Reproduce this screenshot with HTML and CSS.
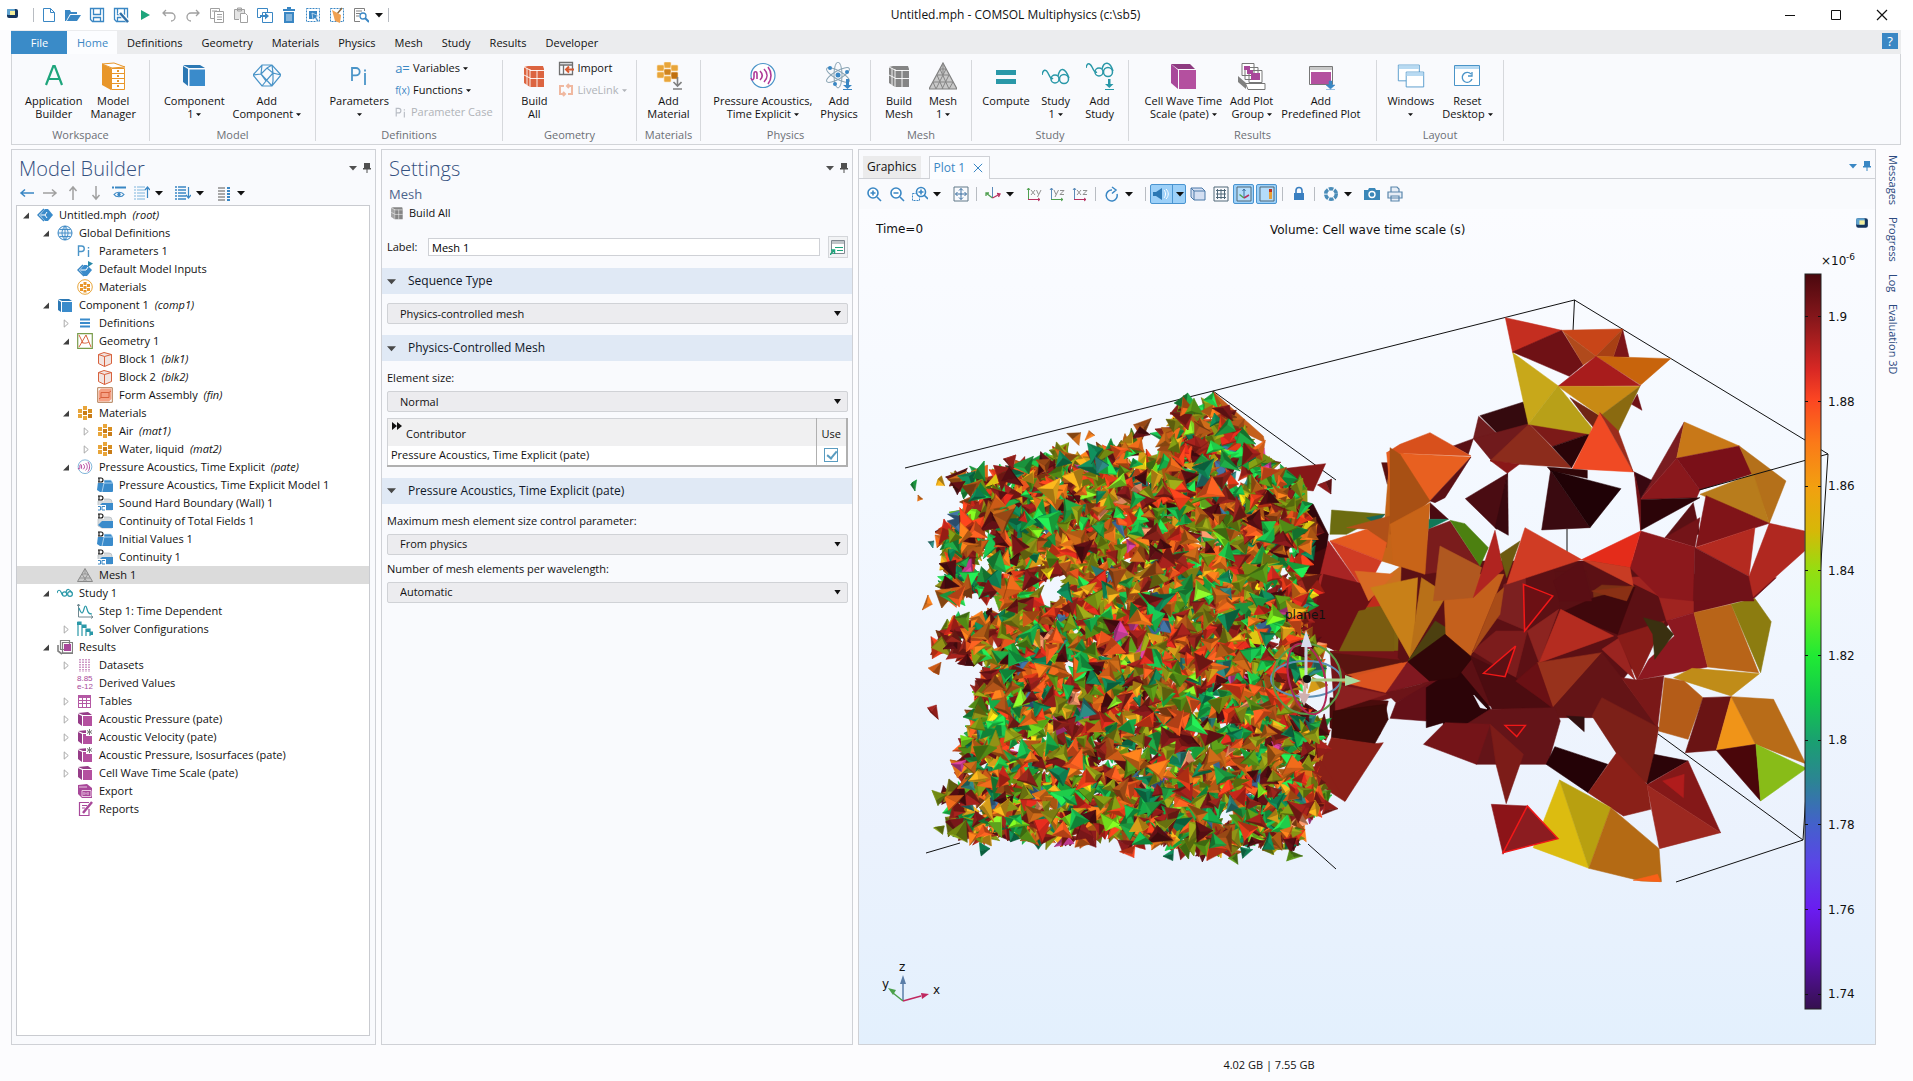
FILE: index.html
```html
<!DOCTYPE html>
<html lang="en">
<head>
<meta charset="utf-8">
<title>Untitled.mph - COMSOL Multiphysics</title>
<link rel="stylesheet" href="styles.css">
</head>
<body>
<svg class="defs" aria-hidden="true">
<defs>
<linearGradient id="g-bg" x1="0" y1="0" x2="0" y2="1"><stop offset="0" stop-color="#fbfcff"/><stop offset=".35" stop-color="#f3f8ff"/><stop offset=".75" stop-color="#ebf2fd"/><stop offset="1" stop-color="#e3f0fd"/></linearGradient>
<linearGradient id="g-bar" x1="0" y1="0" x2="0" y2="1"><stop offset="0" stop-color="#4a080e"/><stop offset=".06" stop-color="#86171b"/><stop offset=".13" stop-color="#d82824"/><stop offset=".17" stop-color="#fb4522"/><stop offset=".23" stop-color="#fb7a18"/><stop offset=".29" stop-color="#f2a010"/><stop offset=".35" stop-color="#d6b808"/><stop offset=".4" stop-color="#98dc10"/><stop offset=".45" stop-color="#70ec1c"/><stop offset=".52" stop-color="#20ea34"/><stop offset=".58" stop-color="#12c84c"/><stop offset=".635" stop-color="#1aa070"/><stop offset=".69" stop-color="#2c8494"/><stop offset=".75" stop-color="#4460cc"/><stop offset=".8" stop-color="#5a46e6"/><stop offset=".865" stop-color="#6a1cf0"/><stop offset=".92" stop-color="#6010bc"/><stop offset="1" stop-color="#35104e"/></linearGradient>
</defs>
<symbol id="logo" viewBox="0 0 16 16"><rect x="3" y="4" width="11" height="9" rx="2" fill="#14355e"/><rect x="3" y="4" width="8" height="6" rx="1" fill="#5fa3d0"/><rect x="6" y="6" width="5" height="4" fill="#f4ee9a"/></symbol>
<symbol id="new" viewBox="0 0 16 16"><path d="M2.500 1.500h7l4 4v9h-11zM9.500 1.500v4h4" fill="#fff" stroke="#3a87c4"/></symbol>
<symbol id="open" viewBox="0 0 16 16"><path d="M0 3h5l1 2h6v2H5l-4 7H0zM5.500 8H16l-4 6H1.800z" fill="#3a87c4"/></symbol>
<symbol id="save" viewBox="0 0 16 16"><path d="M1.500 1.500h13v13h-11l-2-2zM4.500 1.500v6h7v-6M4.500 14.500v-4h7v4" fill="none" stroke="#3a87c4" stroke-width="1.300"/></symbol>
<symbol id="saveas" viewBox="0 0 16 16"><path d="M1.500 1.500h13v13h-11l-2-2zM4.500 1.500v6h7v-6M4.500 14.500v-4h4" fill="none" stroke="#3a87c4" stroke-width="1.300"/><path d="M6 5l9 9" stroke="#fff" stroke-width="4"/><path d="M7 6l8 9" stroke="#2f6fa6" stroke-width="2.500"/></symbol>
<symbol id="play" viewBox="0 0 16 16"><path d="M4 3l9 5-9 5z" fill="#1ea57c"/></symbol>
<symbol id="undo" viewBox="0 0 16 16"><path d="M5 3L2 6l3 3M2 6h8a4 4 0 0 1 0 8" fill="none" stroke="#a0a0a0" stroke-width="1.300"/></symbol>
<symbol id="redo" viewBox="0 0 16 16"><path d="M11 3l3 3-3 3M14 6H6a4 4 0 0 0 0 8" fill="none" stroke="#a0a0a0" stroke-width="1.300"/></symbol>
<symbol id="copy" viewBox="0 0 16 16"><path d="M5 11.500H1.500v-10h9V4M5.500 4.500h9v11h-9zM8 7.500h5M8 10h5M8 12.500h5M3 4h5" fill="none" stroke="#a0a0a0"/></symbol>
<symbol id="paste" viewBox="0 0 16 16"><path d="M6 12.500H1.500v-10h10V6M4.500 1h4v3h-4z" fill="#e4e4e4" stroke="#a0a0a0"/><path d="M7.500 6.500h5l2 2v7h-7z" fill="#fff" stroke="#a0a0a0"/></symbol>
<symbol id="dup" viewBox="0 0 16 16"><path d="M4 10.500H.5v-9h10V5M5.500 5.500h10v10h-10z" fill="none" stroke="#3a87c4"/><path d="M3 8h5V5.500L12 9l-4 3.500V10H3z" fill="#3a87c4"/></symbol>
<symbol id="trash" viewBox="0 0 16 16"><path d="M2 2h12v2H2zM6 0h4v2H6zM3 5h10v11H3z" fill="#3a87c4"/><path d="M6 7v7M8 7v7M10 7v7" stroke="#cfe2f2"/></symbol>
<symbol id="selbox" viewBox="0 0 16 16"><path d="M1.500 1.500h13v13h-13z" fill="none" stroke="#3a87c4" stroke-dasharray="2 1"/><path d="M4 4h8v8H4z" fill="#3a87c4"/><path d="M7 6l7 3-3 1 3 4-2 1-2-4-2 2z" fill="#3a87c4" stroke="#fff" stroke-width=".6"/></symbol>
<symbol id="clean" viewBox="0 0 16 16"><path d="M1.500 1.500h13v13h-13z" fill="none" stroke="#3a87c4" stroke-dasharray="2 1"/><path d="M13 1L8 7" stroke="#8b6a40" stroke-width="1.500"/><path d="M3 3l9 5-1 8-5-2z" fill="#f0a050"/></symbol>
<symbol id="find" viewBox="0 0 16 16"><path d="M11.500 4V1.500h-10v13H7M3 4h6M3 6.500h4M3 9h3" fill="none" stroke="#808080"/><circle cx="10" cy="9" r="3" fill="#fff" stroke="#3a87c4" stroke-width="1.300"/><path d="M12 11l4 4" stroke="#3a87c4" stroke-width="2"/></symbol>
<symbol id="caret" viewBox="0 0 8 8"><path d="M0 2h8L4 6.500z" fill="currentColor"/></symbol>
<symbol id="pin" viewBox="0 0 8 12"><path d="M1 1h6v5h1v1.500H0V6h1zM3.500 7h1v4h-1z" fill="currentColor"/></symbol>
<symbol id="min" viewBox="0 0 12 12"><path d="M1 6.500h10" stroke="#111"/></symbol>
<symbol id="max" viewBox="0 0 12 12"><path d="M1.500 1.500h9v9h-9z" fill="none" stroke="#111"/></symbol>
<symbol id="close" viewBox="0 0 12 12"><path d="M1 1l10 10M11 1L1 11" stroke="currentColor" stroke-width="1.200"/></symbol>

<symbol id="b-app" viewBox="0 0 28 28"><path d="M6 23L13.300 4h1.400L22 23M8.500 17h11" fill="none" stroke="#1ea57c" stroke-width="2.200"/></symbol>
<symbol id="b-mm" viewBox="0 0 28 28"><path d="M3 2l12-1 11 4-13 1z" fill="#fff" stroke="#e8962a"/><path d="M3 2l9 4v22l-9-5z" fill="#e8962a"/><path d="M12.500 6.500h13v21h-13zM12.500 11.500h13M12.500 16.500h13M12.500 21.500h13" fill="#fff" stroke="#e8962a"/><path d="M18 9h2M18 14h2M18 19h2M18 24h2" stroke="#e8962a" stroke-width="2"/></symbol>
<symbol id="b-comp" viewBox="0 0 28 28"><path d="M3 3h17l5 3H9zM3 4l5 3v17l-5-4z" fill="#2c78b4"/><path d="M9.500 7.500H25V24H9.500z" fill="#3a8bcb"/></symbol>
<symbol id="b-addc" viewBox="0 0 28 28"><path d="M9 3h10l9 10-9 11H9L0 13zM9 3l-1 9 11 12M19 3l1 8 8 2M8 12l6-6 6 5-7 8zM14 6l5-3M8 12L0 13M20 11v8l-1 5M13 19l-4 5" fill="none" stroke="#4a94c8" stroke-width="1.200"/></symbol>
<symbol id="pi" viewBox="0 0 16 16"><path d="M1.500 13V3h3a2.700 2.700 0 0 1 0 5.500h-3M11.500 7v7M11.500 4v1.500" fill="none" stroke="#4a94c8" stroke-width="1.400"/></symbol>
<symbol id="b-pi" viewBox="0 0 28 28"><path d="M7 19V6h4a3.700 3.700 0 0 1 0 7.400H7M20 11v12M20 7.500v2" fill="none" stroke="#4a94c8" stroke-width="1.800"/></symbol>
<symbol id="pig" viewBox="0 0 16 16"><path d="M1.500 13V3h3a2.700 2.700 0 0 1 0 5.500h-3M11.500 7v7M11.500 4v1.500" fill="none" stroke="#b8bcc4" stroke-width="1.400"/></symbol>
<symbol id="b-build" viewBox="0 0 28 28"><path d="M4 5l4-1h15l1 3v18H10l-6-4z" fill="currentColor"/><path d="M10 8.500h14M10 7v18M4 5l6 3M10 16.500h14M17 8v17M7 6.500v17M4 13l6 3" stroke="#fff" stroke-width=".9" fill="none"/></symbol>
<symbol id="import" viewBox="0 0 16 16"><path d="M1.500 2.500h13v12h-13zM1.500 5h13M5.500 5v9" fill="none" stroke="#707070" stroke-width="1.300"/><path d="M16 9.500H8m3-3l-3 3 3 3" stroke="#d85a30" stroke-width="2" fill="none"/></symbol>
<symbol id="livelink" viewBox="0 0 16 16"><path d="M6 4H2v8h5M5 10l2 2-2 2M10 12h4V4H9M11 2L9 4l2 2" fill="none" stroke="#f0b8a0" stroke-width="2"/></symbol>
<symbol id="matblk" viewBox="0 0 16 16"><g fill="#e8a53a"><rect x="6" y="1" width="4" height="4"/><rect x="1" y="4" width="4" height="4"/><rect x="11" y="4" width="4" height="4" fill="#d88e20"/><rect x="6" y="6" width="4" height="4" fill="#c87c18"/><rect x="1" y="9" width="4" height="4"/><rect x="11" y="9" width="4" height="4" fill="#c87c18"/><rect x="6" y="11" width="4" height="4"/></g></symbol>
<symbol id="b-mat" viewBox="0 0 28 28"><g fill="#e8a53a" stroke="#fbe3b8" stroke-width=".6"><rect x="10" y="0" width="7" height="6" rx="1"/><rect x="3" y="3" width="7" height="6" rx="1"/><rect x="17" y="3" width="7" height="6" rx="1"/><rect x="10" y="7" width="7" height="6" rx="1" fill="#cf8420"/><rect x="3" y="10" width="7" height="6" rx="1"/><rect x="17" y="10" width="7" height="7" rx="1" fill="#c0700f"/><rect x="10" y="14" width="7" height="6" rx="1"/></g><path d="M23.500 15v9m-4-4l4 4 4-4M19 27h9" stroke="#808080" stroke-width="1.600" fill="none"/></symbol>
<symbol id="b-pate" viewBox="0 0 28 28"><circle cx="14" cy="13.500" r="12" fill="#fff" stroke="#4a94c8" stroke-width="1.200"/><path d="M2 16c1 3 3 2 3-1v-3c0-3 3-3 3 0v5M11 9c3 3 3 6 0 9M15 7c4 4 4 9 0 13M19 5c4 5 4 12 0 17" fill="none" stroke="#b03a98" stroke-width="1.600"/></symbol>
<symbol id="b-phys" viewBox="0 0 28 28"><g fill="none" stroke="#8aa4b4"><ellipse cx="13" cy="13" rx="4" ry="13"/><ellipse cx="13" cy="13" rx="4" ry="13" transform="rotate(60 13 13)"/><ellipse cx="13" cy="13" rx="4" ry="13" transform="rotate(120 13 13)"/></g><g fill="#3a87c4"><circle cx="13" cy="13" r="2.500"/><circle cx="5" cy="6" r="2"/><circle cx="22" cy="10" r="2"/><circle cx="10" cy="22" r="2"/><path d="M21 17h3v6h3l-4.500 4L18 23h3z"/></g><path d="M18 27.500h9" stroke="#3a87c4"/></symbol>
<symbol id="b-tri" viewBox="0 0 28 28"><path d="M14 1L28 27H0z" fill="#c8c8c8" stroke="#808080" stroke-width="1.200"/><path d="M11 7h6M8 13h12M4 20h20M17 7L7 27M20 13l-7 14M24 20l-4 7M11 7l9 20M8 13l6 14M4 20l3 7M14 1v12" fill="none" stroke="#858585"/></symbol>
<symbol id="b-eq" viewBox="0 0 28 28"><path d="M4 8h20v5H4zM4 17h20v5H4z" fill="#2a98a8"/></symbol>
<symbol id="b-study" viewBox="0 0 28 28"><g fill="none" stroke="#2a98a8" stroke-width="1.500"><path d="M0 13c1-6 4-6 6-2s3 7 5 5"/><circle cx="13" cy="17" r="4"/><circle cx="22" cy="17" r="4.500"/><path d="M16 14c2-9 7-9 11 2"/></g></symbol>
<symbol id="b-studyadd" viewBox="0 0 28 28"><g fill="none" stroke="#2a98a8" stroke-width="1.500"><path d="M0 6c1-6 4-5 6-1s3 6 5 5"/><circle cx="13" cy="10" r="4"/><circle cx="22" cy="10" r="4.500"/><path d="M16 7c2-8 8-8 11 2"/></g><path d="M22 17h2.500v5h3l-4.200 4-4.300-4h3zM19 27h9v1h-9z" fill="#2a98a8"/></symbol>
<symbol id="b-cube" viewBox="0 0 28 28"><path d="M2 2h19l5 5H9z" fill="#8d3a80"/><path d="M2 2l7 6v19l-7-6z" fill="#a8489a"/><path d="M10 8h17v19H10z" fill="#b4509f"/></symbol>
<symbol id="b-plots" viewBox="0 0 28 28"><g fill="#fff" stroke="#777"><path d="M4 1.500h12v12H4zM7 5.500h13v12H7zM11 8.500h13v12H11z"/></g><path d="M6 4h6v4H6zM9 8h6v4H9zM13 11h9v7h-9z" fill="#a8489a"/><path d="M0 14l8 7v6l-8-7z" fill="#808080"/><path d="M7.500 21.500H27v6H10z" fill="#fff" stroke="#777"/></symbol>
<symbol id="b-predef" viewBox="0 0 28 28"><path d="M2.500 4.500h23v18h-23z" fill="#fff" stroke="#777"/><path d="M3 5h22v3H3z" fill="#c8c8c8"/><path d="M4 10h20v12H4z" fill="#b4509f"/><path d="M22 19h3v4h3l-4.500 4L19 23h3zM19 27.500h9" fill="#3a87c4" stroke="#3a87c4" stroke-width=".5"/></symbol>
<symbol id="b-wins" viewBox="0 0 32 28"><path d="M1.500 1.500h24v18h-24z" fill="#fff" stroke="#4a94c8"/><path d="M2 2h23v4H2z" fill="#b8daf2"/><path d="M10.500 9.500h20v17h-20z" fill="#fff" stroke="#4a94c8"/><path d="M11 10h19v4H11z" fill="#b8daf2"/></symbol>
<symbol id="b-reset" viewBox="0 0 28 28"><path d="M1.500 3.500h25v20h-25z" fill="#fff" stroke="#4a94c8"/><path d="M2 4h24v3H2z" fill="#b8daf2"/><path d="M18 12a5 5 0 1 0 1 5M19 10v4h-4" fill="none" stroke="#4a94c8" stroke-width="1.300"/></symbol>

<symbol id="ar-l" viewBox="0 0 16 16"><path d="M15 8H2M6 4.500L2 8l4 3.500" fill="none" stroke="currentColor" stroke-width="1.500"/></symbol>
<symbol id="ar-r" viewBox="0 0 16 16"><path d="M1 8h13M10 4.500L14 8l-4 3.500" fill="none" stroke="currentColor" stroke-width="1.500"/></symbol>
<symbol id="ar-u" viewBox="0 0 16 16"><path d="M8 15V2M4.500 6L8 2l3.500 4" fill="none" stroke="currentColor" stroke-width="1.500"/></symbol>
<symbol id="ar-d" viewBox="0 0 16 16"><path d="M8 1v13M4.500 10L8 14l3.500-4" fill="none" stroke="currentColor" stroke-width="1.500"/></symbol>
<symbol id="eye" viewBox="0 0 16 16"><path d="M1 2.500h2M4 2.500h11" stroke="#3a87c4" stroke-width="2"/><path d="M3 9.500c2-3 8-3 10 0-2 3-8 3-10 0z" fill="none" stroke="#3a87c4" stroke-width="1.200"/><circle cx="8" cy="9.500" r="1.700" fill="#3a87c4"/></symbol>
<symbol id="lst-u" viewBox="0 0 16 16"><path d="M0 2h11M0 5h11M0 8h11M0 11h11M0 14h11" stroke="#7db4dc" stroke-dasharray="2 1 10"/><path d="M13.500 13V2M11 5l2.500-3L16 5" fill="none" stroke="#3a87c4" stroke-width="1.200"/></symbol>
<symbol id="lst-d" viewBox="0 0 16 16"><path d="M0 2h11M0 5h11M0 8h11M0 11h11M0 14h11" stroke="#3a87c4" stroke-width="1.500" stroke-dasharray="2 1 10"/><path d="M13.500 2v11M11 10l2.500 3 2.500-3" fill="none" stroke="#3a87c4" stroke-width="1.200"/></symbol>
<symbol id="cols" viewBox="0 0 16 16"><path d="M2 3h7M2 6h7M2 9h7M2 12h7M2 15h7" stroke="#a8a8a8" stroke-width="2"/><path d="M11 3h3M11 6h3M11 9h3M11 12h3M11 15h3" stroke="#3a87c4" stroke-width="2"/></symbol>

<symbol id="t-open" viewBox="0 0 8 8"><path d="M7 1v6H1z" fill="#404040"/></symbol>
<symbol id="t-shut" viewBox="0 0 8 10"><path d="M2 1l4.500 4L2 9z" fill="#fff" stroke="#a0a0a0"/></symbol>
<symbol id="root" viewBox="0 0 16 16"><path d="M8 2h3l5 6-5 6H8L3 8z" fill="#3a8bcb"/><path d="M7 2L1 8l6 6" fill="none" stroke="#3a87c4" stroke-width="1.500"/><path d="M4 8h4l2-3M8 8l2 3" stroke="#fff" fill="none"/></symbol>
<symbol id="globe" viewBox="0 0 16 16"><circle cx="8" cy="8" r="7" fill="#eaf4fb" stroke="#3a87c4"/><path d="M1 8h14M8 1v14M2.500 4.500h11M2.500 11.500h11M8 1C4 5 4 11 8 15M8 1c4 4 4 10 0 14" fill="none" stroke="#3a87c4" stroke-width=".9"/></symbol>
<symbol id="inputs" viewBox="0 0 16 16"><path d="M7 4h3l5 5-5 6H7L3 9z" fill="#3a8bcb"/><path d="M6 4L1 9l6 6" fill="none" stroke="#3a87c4" stroke-width="1.500"/><path d="M11 0l5 2.500L11 6z" fill="#2a88a8"/><path d="M4 9h5l2-3" stroke="#fff" fill="none"/></symbol>
<symbol id="matc" viewBox="0 0 16 16"><circle cx="8" cy="8" r="7.300" fill="#fff" stroke="#e8a53a"/><path d="M6.500 3h3v3h-3zM3 5h3v3H3zM10 5h3v3h-3zM6.500 7h3v3h-3zM3 9h3v3H3zM10 9h3v3h-3zM6.500 11h3v2.500h-3z" fill="#e8962a"/></symbol>
<symbol id="comp" viewBox="0 0 16 16"><path d="M1 2h11l3 2H5zM1 3l3 2v10l-3-2z" fill="#2c78b4"/><path d="M5 5h10v10H5z" fill="#3a8bcb"/></symbol>
<symbol id="eq3" viewBox="0 0 16 16"><path d="M3 4.500h10M3 8h10M3 11.500h10" stroke="#3a8bcb" stroke-width="2"/></symbol>
<symbol id="geom" viewBox="0 0 16 16"><path d="M.7.7h14.600v14.600H.7z" fill="#fff" stroke="#7a9c4c" stroke-width="1.200"/><path d="M2 2l4 8M2 14L9 2l5 12M4 9c3 2 6 1 8 0" fill="none" stroke="#d8613c"/></symbol>
<symbol id="block" viewBox="0 0 16 16"><path d="M1.500 3.500L7 1.500l7.500 2v9l-7 3-6-3z" fill="#f2e4e0" stroke="#d8613c"/><path d="M1.500 3.500l6 2 7-2M7.500 5.500v10" fill="none" stroke="#d8613c"/></symbol>
<symbol id="asm" viewBox="0 0 16 16"><path d="M.7.7h14.600v14.600H.7z" fill="#fff" stroke="#b07a50"/><path d="M1.500 4L4 1.500h10.500V12L12 14.500H1.500z" fill="#f5a184"/><path d="M4 5.500h8v5H4zM12 5.500L14 4M4 10.500L2 12" fill="none" stroke="#d8613c"/></symbol>
<symbol id="dom" viewBox="0 0 16 16"><path d="M1 5h14a1 1 0 0 1 1 1v8a1 1 0 0 1-1 1H3L0 13z" fill="#3a8bcb"/><path d="M7 3h7l2 3H7zM5 15l2-9" fill="#3a8bcb" stroke="#d8ecfa" stroke-width=".7"/><path d="M0 0h7v6H0z" fill="#fff"/><path d="M2 1h2a2 2 0 0 1 0 4H2zM1 1h2M1 5h2" fill="none" stroke="#111" stroke-width="1.100"/></symbol>
<symbol id="bnd" viewBox="0 0 16 16"><path d="M1 4h11a3 3 0 0 1 3 3v8H5L1 13z" fill="#d8dcde" stroke="#b0b8be" stroke-width=".7"/><path d="M5 8h11v7H5L1 12z" fill="#3a8bcb"/><path d="M0 0h7v6H0z" fill="#fff"/><path d="M2 1h2a2 2 0 0 1 0 4H2zM1 1h2M1 5h2" fill="none" stroke="#111" stroke-width="1.100"/></symbol>
<symbol id="bnd2" viewBox="0 0 16 16"><use href="#bnd"/><path d="M0 10h9v6H0z" fill="#fff"/><path d="M1 11.500h2.500V15H1M5 11.500V15h3M5 11.500h3" fill="none" stroke="#3a87c4"/></symbol>
<symbol id="tri" viewBox="0 0 16 16"><path d="M8 1.500l7.500 13H.5z" fill="#c8c8c8" stroke="#888"/><path d="M5 7h6M3 11h10M11 7l-5 8M5 7l5 8M8 2v5" stroke="#8a8a8a" stroke-width=".8" fill="none"/></symbol>
<symbol id="study" viewBox="0 0 16 16"><g fill="none" stroke="#2a98a8" stroke-width="1.200"><path d="M0 8c1-4 3-3 4-1s1 3 2 2"/><circle cx="7.500" cy="9" r="2.200"/><circle cx="13" cy="9" r="2.400"/><path d="M9 7c1-4 4-3 6 1"/></g></symbol>
<symbol id="step" viewBox="0 0 16 16"><path d="M1.500 1v13H16M0 3l1.500-2L3 3M14 12.500l2 1.500-2 1.500" fill="none" stroke="#708890"/><path d="M2 5c3 8 4 5 5 1s2-4 3 0 2 5 5 5" fill="none" stroke="#2a98a8" stroke-width="1.200"/></symbol>
<symbol id="solver" viewBox="0 0 16 16"><path d="M1 15V1h3v3M5 15V4h4v3M9 15V8h4v3M13 15v-4h3" fill="none" stroke="#2a98a8" stroke-width="1.200"/><path d="M0 1h4v3H0zM5 4h4v3H5zM9 8h4v3H9zM13 11h3v3h-3z" fill="#2a98a8"/></symbol>
<symbol id="results" viewBox="0 0 16 16"><path d="M3.500 1.500h9v9h-9zM5.500 3.500h10v11h-10z" fill="#fff" stroke="#808080" stroke-width="1.200"/><path d="M7 5h7v7H7z" fill="#a8489a"/><path d="M1 6v6l4 3M5 14h11" stroke="#808080" stroke-width="1.600" fill="none"/></symbol>
<symbol id="dsets" viewBox="0 0 16 16"><path d="M3 2v13M6 2v13M9 2v13M12 2v13" stroke="#c07ab4" stroke-width="1.500" stroke-dasharray="1.500 1"/></symbol>
<symbol id="tables" viewBox="0 0 16 16"><path d="M1 2h13v13H1z" fill="#b458a4"/><path d="M2 5h3v2H2zM6 5h3v2H6zM10 5h3v2h-3zM2 8h3v2H2zM6 8h3v2H6zM10 8h3v2h-3zM2 11h3v3H2zM6 11h3v3H6zM10 11h3v3h-3z" fill="#fff"/></symbol>
<symbol id="pcube" viewBox="0 0 16 16"><path d="M1 2l10-1 4 3H6zM1 3l4 2v10l-4-3z" fill="#963c88"/><path d="M6 5h9v10H6z" fill="#b4509f"/></symbol>
<symbol id="pcubes" viewBox="0 0 16 16"><use href="#pcube"/><path d="M9 0h7v7H9z" fill="#fff"/><path d="M12.500 0v6M10 1.500l5 3M15 1.500l-5 3" stroke="#777"/></symbol>
<symbol id="export" viewBox="0 0 16 16"><path d="M1 2l9-1 5 4v10H5l-4-4z" fill="#a8489a"/><path d="M2 4h8M5 7.500h9v6H5zM7 9v3M9 9.500v2M11 9v3" stroke="#f2d8ec" fill="none" stroke-width=".9"/></symbol>
<symbol id="report" viewBox="0 0 16 16"><path d="M12 8v6.500H2.500v-13H12M5 4.500h5M5 7h3" fill="none" stroke="#a8489a" stroke-width="1.200"/><path d="M15 1L6 12" stroke="#a8489a" stroke-width="2.500"/></symbol>

<symbol id="go" viewBox="0 0 16 16"><path d="M1.500 1.500h13v13h-13z" fill="#fff" stroke="#808890"/><path d="M2 2h12v3H2z" fill="#c0c4c8"/><path d="M5 8.500h8M7 11.500h6" stroke="#1ea57c"/><path d="M0 16l4-5M1 11h3.500V15" stroke="#1ea57c" stroke-width="1.500" fill="none"/></symbol>
<symbol id="ff" viewBox="0 0 10 8"><path d="M0 0l5 4-5 4zM5 0l5 4-5 4z" fill="#111"/></symbol>
<symbol id="zin" viewBox="0 0 16 16"><circle cx="7" cy="7" r="5" fill="#fff" stroke="#3a87c4" stroke-width="1.600"/><path d="M4.500 7h5M7 4.500v5M11 11l4 4" stroke="#3a87c4" stroke-width="1.600"/></symbol>
<symbol id="zout" viewBox="0 0 16 16"><circle cx="7" cy="7" r="5" fill="#fff" stroke="#3a87c4" stroke-width="1.600"/><path d="M4.500 7h5M11 11l4 4" stroke="#3a87c4" stroke-width="1.600"/></symbol>
<symbol id="zbox" viewBox="0 0 16 16"><path d="M.5 7.500h7v7h-7z" fill="none" stroke="#3a87c4" stroke-dasharray="2 1"/><circle cx="9" cy="6" r="4.500" fill="#fff" stroke="#3a87c4" stroke-width="1.600"/><path d="M6.500 6h5M9 3.500v5M12 9l4 4" stroke="#3a87c4" stroke-width="1.600"/></symbol>
<symbol id="zext" viewBox="0 0 16 16"><path d="M1 1h14v14H1z" fill="none" stroke="#607888"/><path d="M8 2.500v11M2.500 8h11M6 4.500l2-2 2 2M6 11.500l2 2 2-2M4.500 6l-2 2 2 2M11.500 6l2 2-2 2" fill="none" stroke="#3a6fa0"/></symbol>
<symbol id="axes" viewBox="0 0 16 16"><path d="M7.500 12V1" stroke="#5a8ab8"/><path d="M7.500 12L1 7M1 10V7h3" stroke="#50a050" stroke-width="1.300" fill="none"/><path d="M7.500 12L15 8M12 7.500l3 .5-1.500 3" stroke="#b83060" stroke-width="1.300" fill="none"/></symbol>
<symbol id="axxy" viewBox="0 0 16 16"><path d="M2.500 13V2M1 4l1.500-2L4 4" stroke="#50a050" fill="none"/><path d="M2 13.500h12M12 12l2 1.500-2 1.500" stroke="#b83060" fill="none"/><path d="M5 4l4 5M9 4L5 9M10.500 4l2 4.500M15 4l-3.500 7" stroke="#909090" fill="none"/></symbol>
<symbol id="axyz" viewBox="0 0 16 16"><path d="M2.500 13V2M1 4l1.500-2L4 4" stroke="#5a8ab8" fill="none"/><path d="M2 13.500h12M12 12l2 1.500-2 1.500" stroke="#50a050" fill="none"/><path d="M5 4l2 4.500M9.500 4L6 11M11 4.500h4l-4 4h4" stroke="#909090" fill="none"/></symbol>
<symbol id="axxz" viewBox="0 0 16 16"><path d="M2.500 13V2M1 4l1.500-2L4 4" stroke="#5a8ab8" fill="none"/><path d="M2 13.500h12M12 12l2 1.500-2 1.500" stroke="#b83060" fill="none"/><path d="M5 4l4 5M9 4L5 9M11 4.500h4l-4 4h4" stroke="#909090" fill="none"/></symbol>
<symbol id="rot" viewBox="0 0 16 16"><path d="M8 4a5.500 5.500 0 1 0 5 4M8 1l4 3-4 3.500" fill="none" stroke="#3a87c4" stroke-width="1.500"/></symbol>
<symbol id="light" viewBox="0 0 16 16"><path d="M0 6h3l6-4v12L3 10H0z" fill="#2c78b4"/><path d="M11 4c2 2 2 6 0 8M13 3c3 3 3 7 0 10" stroke="#fff" fill="none"/></symbol>
<symbol id="wcube" viewBox="0 0 16 16"><path d="M1 2h11l3 3v9H4l-3-3zM4 5h11M4 5v9M1 2l3 3" fill="#d4dff2" stroke="#4a78a8"/></symbol>
<symbol id="grid" viewBox="0 0 16 16"><path d="M1 1h14v14H1zM3 4.500h10M3 8h10M3 11.500h10M4.500 3v10M8 3v10M11.500 3v10" fill="none" stroke="#506878"/></symbol>
<symbol id="axbox" viewBox="0 0 16 16"><path d="M1 1h14v14H1z" fill="#b4dcfa" stroke="#506878"/><path d="M8 12V3M6.500 5L8 3l1.500 2" stroke="#3a6fa0" fill="none"/><path d="M8 12L3.500 8.500" stroke="#50a050" stroke-width="1.500"/><path d="M8 12l5-3" stroke="#b83060" stroke-width="1.500"/></symbol>
<symbol id="legend" viewBox="0 0 16 16"><path d="M1 1h14v14H1z" fill="#b4dcfa" stroke="#506878"/><path d="M10 3h3v3h-3z" fill="#c03020"/><path d="M10 6h3v3h-3z" fill="#f0a030"/><path d="M10 9h3v4h-3z" fill="#e0a040"/></symbol>
<symbol id="lock" viewBox="0 0 16 16"><path d="M3 7h10v7H3z" fill="#3a7fc0"/><path d="M5 7V4.500a3 3 0 0 1 6 0V7" fill="none" stroke="#3a7fc0" stroke-width="1.600"/></symbol>
<symbol id="apert" viewBox="0 0 16 16"><circle cx="8" cy="8" r="5.300" fill="none" stroke="#4a8cb8" stroke-width="3.500" stroke-dasharray="4.500 1.050"/></symbol>
<symbol id="camera" viewBox="0 0 16 16"><path d="M0 4h4l1-2h6l1 2h4v10H0z" fill="#3a87b8"/><circle cx="8" cy="8.500" r="3" fill="none" stroke="#fff" stroke-width="1.400"/></symbol>
<symbol id="print" viewBox="0 0 16 16"><path d="M4 6V1h6l2 2v3M1 6h14v6H1zM4 10h8v5H4z" fill="#e8eef6" stroke="#5a86ac" stroke-width="1.200"/></symbol>
</svg>

<header class="titlebar">
  <svg class="i16 applogo"><use href="#logo"/></svg>
  <div class="quick" role="toolbar" aria-label="Quick access">
    <i class="vsep"></i>
    <button aria-label="New"><svg class="i16"><use href="#new"/></svg></button>
    <button aria-label="Open"><svg class="i16"><use href="#open"/></svg></button>
    <button aria-label="Save"><svg class="i16"><use href="#save"/></svg></button>
    <button aria-label="Save as"><svg class="i16"><use href="#saveas"/></svg></button>
    <button aria-label="Run"><svg class="i16"><use href="#play"/></svg></button>
    <button aria-label="Undo"><svg class="i16"><use href="#undo"/></svg></button>
    <button aria-label="Redo"><svg class="i16"><use href="#redo"/></svg></button>
    <button aria-label="Copy"><svg class="i16"><use href="#copy"/></svg></button>
    <button aria-label="Paste"><svg class="i16"><use href="#paste"/></svg></button>
    <button aria-label="Duplicate"><svg class="i16"><use href="#dup"/></svg></button>
    <button aria-label="Delete"><svg class="i16"><use href="#trash"/></svg></button>
    <button aria-label="Select"><svg class="i16"><use href="#selbox"/></svg></button>
    <button aria-label="Clear selection"><svg class="i16"><use href="#clean"/></svg></button>
    <button aria-label="Find"><svg class="i16"><use href="#find"/></svg></button>
    <button class="cbtn" aria-label="More"><svg class="caret"><use href="#caret"/></svg></button>
    <i class="vsep"></i>
  </div>
  <h1 class="apptitle">Untitled.mph - COMSOL Multiphysics (c:\sb5)</h1>
  <div class="winbtns">
    <button aria-label="Minimize"><svg><use href="#min"/></svg></button>
    <button aria-label="Maximize"><svg><use href="#max"/></svg></button>
    <button aria-label="Close"><svg><use href="#close"/></svg></button>
  </div>
</header>

<div class="app">
<nav class="menu" aria-label="Ribbon tabs">
  <button class="file">File</button><button class="on">Home</button><button>Definitions</button><button>Geometry</button><button>Materials</button><button>Physics</button><button>Mesh</button><button>Study</button><button>Results</button><button>Developer</button>
  <button class="help" aria-label="Help">?</button>
</nav>

<div class="ribbon">
  <section class="grp g-work"><div class="btns">
    <button class="big"><svg><use href="#b-app"/></svg><span>Application<br>Builder</span></button>
    <button class="big"><svg><use href="#b-mm"/></svg><span>Model<br>Manager</span></button>
  </div><h2>Workspace</h2></section>
  <section class="grp g-model"><div class="btns">
    <button class="big"><svg><use href="#b-comp"/></svg><span>Component<br>1 <svg class="dd"><use href="#caret"/></svg></span></button>
    <button class="big"><svg><use href="#b-addc"/></svg><span>Add<br>Component <svg class="dd"><use href="#caret"/></svg></span></button>
  </div><h2>Model</h2></section>
  <section class="grp g-defs"><div class="btns">
    <button class="big"><svg><use href="#b-pi"/></svg><span>Parameters<br><svg class="dd"><use href="#caret"/></svg></span></button>
    <div class="stack">
      <button><b>a=</b>Variables <svg class="dd"><use href="#caret"/></svg></button>
      <button><b class="fx">f(x)</b>Functions <svg class="dd"><use href="#caret"/></svg></button>
      <button disabled><svg class="i12"><use href="#pig"/></svg>Parameter Case</button>
    </div>
  </div><h2>Definitions</h2></section>
  <section class="grp g-geom"><div class="btns">
    <button class="big"><svg class="c-red"><use href="#b-build"/></svg><span>Build<br>All</span></button>
    <div class="stack">
      <button><svg class="i16"><use href="#import"/></svg>Import</button>
      <button disabled><svg class="i16"><use href="#livelink"/></svg>LiveLink <svg class="dd"><use href="#caret"/></svg></button>
    </div>
  </div><h2>Geometry</h2></section>
  <section class="grp g-mat"><div class="btns">
    <button class="big"><svg><use href="#b-mat"/></svg><span>Add<br>Material</span></button>
  </div><h2>Materials</h2></section>
  <section class="grp g-phys"><div class="btns">
    <button class="big"><svg><use href="#b-pate"/></svg><span>Pressure Acoustics,<br>Time Explicit <svg class="dd"><use href="#caret"/></svg></span></button>
    <button class="big"><svg><use href="#b-phys"/></svg><span>Add<br>Physics</span></button>
  </div><h2>Physics</h2></section>
  <section class="grp g-mesh"><div class="btns">
    <button class="big"><svg class="c-grey"><use href="#b-build"/></svg><span>Build<br>Mesh</span></button>
    <button class="big"><svg><use href="#b-tri"/></svg><span>Mesh<br>1 <svg class="dd"><use href="#caret"/></svg></span></button>
  </div><h2>Mesh</h2></section>
  <section class="grp g-study"><div class="btns">
    <button class="big"><svg><use href="#b-eq"/></svg><span>Compute</span></button>
    <button class="big"><svg><use href="#b-study"/></svg><span>Study<br>1 <svg class="dd"><use href="#caret"/></svg></span></button>
    <button class="big"><svg><use href="#b-studyadd"/></svg><span>Add<br>Study</span></button>
  </div><h2>Study</h2></section>
  <section class="grp g-res"><div class="btns">
    <button class="big"><svg><use href="#b-cube"/></svg><span>Cell Wave Time<br>Scale (pate) <svg class="dd"><use href="#caret"/></svg></span></button>
    <button class="big"><svg><use href="#b-plots"/></svg><span>Add Plot<br>Group <svg class="dd"><use href="#caret"/></svg></span></button>
    <button class="big"><svg><use href="#b-predef"/></svg><span>Add<br>Predefined Plot</span></button>
  </div><h2>Results</h2></section>
  <section class="grp g-lay"><div class="btns">
    <button class="big"><svg><use href="#b-wins"/></svg><span>Windows<br><svg class="dd"><use href="#caret"/></svg></span></button>
    <button class="big"><svg><use href="#b-reset"/></svg><span>Reset<br>Desktop <svg class="dd"><use href="#caret"/></svg></span></button>
  </div><h2>Layout</h2></section>
</div>

<main class="work">
  <section class="panel builder">
    <div class="phead"><h2>Model Builder</h2><span class="pctl"><svg class="caret"><use href="#caret"/></svg><svg class="pin"><use href="#pin"/></svg></span></div>
    <div class="tools" role="toolbar" aria-label="Model Builder">
      <button class="c-blue" aria-label="Back"><svg class="i16"><use href="#ar-l"/></svg></button>
      <button class="c-mute" aria-label="Forward"><svg class="i16"><use href="#ar-r"/></svg></button>
      <button class="c-mute" aria-label="Move up"><svg class="i16"><use href="#ar-u"/></svg></button>
      <button class="c-mute" aria-label="Move down"><svg class="i16"><use href="#ar-d"/></svg></button>
      <button aria-label="Show"><svg class="i16"><use href="#eye"/></svg></button>
      <button aria-label="Collapse"><svg class="i16"><use href="#lst-u"/></svg></button>
      <button class="cbtn" aria-label="Collapse options"><svg class="caret"><use href="#caret"/></svg></button>
      <button aria-label="Expand"><svg class="i16"><use href="#lst-d"/></svg></button>
      <button class="cbtn" aria-label="Expand options"><svg class="caret"><use href="#caret"/></svg></button>
      <button aria-label="Node text"><svg class="i16"><use href="#cols"/></svg></button>
      <button class="cbtn" aria-label="Node text options"><svg class="caret"><use href="#caret"/></svg></button>
    </div>
    <ul class="tree">
      <li><svg class="tw"><use href="#t-open"/></svg><svg class="i16"><use href="#root"/></svg>Untitled.mph <em>(root)</em></li>
      <li class="l1"><svg class="tw"><use href="#t-open"/></svg><svg class="i16"><use href="#globe"/></svg>Global Definitions</li>
      <li class="l2"><i class="tw"></i><svg class="i16"><use href="#pi"/></svg>Parameters 1</li>
      <li class="l2"><i class="tw"></i><svg class="i16"><use href="#inputs"/></svg>Default Model Inputs</li>
      <li class="l2"><i class="tw"></i><svg class="i16"><use href="#matc"/></svg>Materials</li>
      <li class="l1"><svg class="tw"><use href="#t-open"/></svg><svg class="i16"><use href="#comp"/></svg>Component 1 <em>(comp1)</em></li>
      <li class="l2"><svg class="tw"><use href="#t-shut"/></svg><svg class="i16"><use href="#eq3"/></svg>Definitions</li>
      <li class="l2"><svg class="tw"><use href="#t-open"/></svg><svg class="i16"><use href="#geom"/></svg>Geometry 1</li>
      <li class="l3"><i class="tw"></i><svg class="i16"><use href="#block"/></svg>Block 1 <em>(blk1)</em></li>
      <li class="l3"><i class="tw"></i><svg class="i16"><use href="#block"/></svg>Block 2 <em>(blk2)</em></li>
      <li class="l3"><i class="tw"></i><svg class="i16"><use href="#asm"/></svg>Form Assembly <em>(fin)</em></li>
      <li class="l2"><svg class="tw"><use href="#t-open"/></svg><svg class="i16"><use href="#matblk"/></svg>Materials</li>
      <li class="l3"><svg class="tw"><use href="#t-shut"/></svg><svg class="i16"><use href="#matblk"/></svg>Air <em>(mat1)</em></li>
      <li class="l3"><svg class="tw"><use href="#t-shut"/></svg><svg class="i16"><use href="#matblk"/></svg>Water, liquid <em>(mat2)</em></li>
      <li class="l2"><svg class="tw"><use href="#t-open"/></svg><svg class="i16"><use href="#b-pate"/></svg>Pressure Acoustics, Time Explicit <em>(pate)</em></li>
      <li class="l3"><i class="tw"></i><svg class="i16"><use href="#dom"/></svg>Pressure Acoustics, Time Explicit Model 1</li>
      <li class="l3"><i class="tw"></i><svg class="i16"><use href="#bnd2"/></svg>Sound Hard Boundary (Wall) 1</li>
      <li class="l3"><i class="tw"></i><svg class="i16"><use href="#bnd"/></svg>Continuity of Total Fields 1</li>
      <li class="l3"><i class="tw"></i><svg class="i16"><use href="#dom"/></svg>Initial Values 1</li>
      <li class="l3"><i class="tw"></i><svg class="i16"><use href="#bnd2"/></svg>Continuity 1</li>
      <li class="l2 sel"><i class="tw"></i><svg class="i16"><use href="#tri"/></svg>Mesh 1</li>
      <li class="l1"><svg class="tw"><use href="#t-open"/></svg><svg class="i16"><use href="#study"/></svg>Study 1</li>
      <li class="l2"><i class="tw"></i><svg class="i16"><use href="#step"/></svg>Step 1: Time Dependent</li>
      <li class="l2"><svg class="tw"><use href="#t-shut"/></svg><svg class="i16"><use href="#solver"/></svg>Solver Configurations</li>
      <li class="l1"><svg class="tw"><use href="#t-open"/></svg><svg class="i16"><use href="#results"/></svg>Results</li>
      <li class="l2"><svg class="tw"><use href="#t-shut"/></svg><svg class="i16"><use href="#dsets"/></svg>Datasets</li>
      <li class="l2"><i class="tw"></i><span class="derived">8.85<br>e-12</span>Derived Values</li>
      <li class="l2"><svg class="tw"><use href="#t-shut"/></svg><svg class="i16"><use href="#tables"/></svg>Tables</li>
      <li class="l2"><svg class="tw"><use href="#t-shut"/></svg><svg class="i16"><use href="#pcube"/></svg>Acoustic Pressure (pate)</li>
      <li class="l2"><svg class="tw"><use href="#t-shut"/></svg><svg class="i16"><use href="#pcubes"/></svg>Acoustic Velocity (pate)</li>
      <li class="l2"><svg class="tw"><use href="#t-shut"/></svg><svg class="i16"><use href="#pcubes"/></svg>Acoustic Pressure, Isosurfaces (pate)</li>
      <li class="l2"><svg class="tw"><use href="#t-shut"/></svg><svg class="i16"><use href="#pcube"/></svg>Cell Wave Time Scale (pate)</li>
      <li class="l2"><i class="tw"></i><svg class="i16"><use href="#export"/></svg>Export</li>
      <li class="l2"><i class="tw"></i><svg class="i16"><use href="#report"/></svg>Reports</li>
    </ul>
  </section>

  <section class="panel settings">
    <div class="phead"><h2>Settings</h2><span class="pctl"><svg class="caret"><use href="#caret"/></svg><svg class="pin"><use href="#pin"/></svg></span></div>
    <p class="sub">Mesh</p>
    <button class="buildall"><svg class="i16 c-grey"><use href="#b-build"/></svg>Build All</button>
    <div class="labelrow"><label for="lbl">Label:</label><input id="lbl" type="text" value="Mesh 1"><button aria-label="Go to source"><svg class="i16"><use href="#go"/></svg></button></div>
    <h3><svg class="caret"><use href="#caret"/></svg>Sequence Type</h3>
    <div class="sec"><div class="dropdown"><select aria-label="Sequence type"><option>Physics-controlled mesh</option></select></div></div>
    <h3><svg class="caret"><use href="#caret"/></svg>Physics-Controlled Mesh</h3>
    <div class="sec">
      <label for="size">Element size:</label>
      <div class="dropdown"><select id="size"><option>Normal</option></select></div>
      <table>
        <thead><tr><th><svg class="ff"><use href="#ff"/></svg><span>Contributor</span></th><th class="use"><span>Use</span></th></tr></thead>
        <tbody><tr><td>Pressure Acoustics, Time Explicit (pate)</td><td class="use"><input type="checkbox" checked aria-label="Use Pressure Acoustics, Time Explicit (pate)"></td></tr></tbody>
      </table>
    </div>
    <h3><svg class="caret"><use href="#caret"/></svg>Pressure Acoustics, Time Explicit (pate)</h3>
    <div class="sec">
      <label for="ctl">Maximum mesh element size control parameter:</label>
      <div class="dropdown"><select id="ctl"><option>From physics</option></select></div>
      <label for="num">Number of mesh elements per wavelength:</label>
      <div class="dropdown"><select id="num"><option>Automatic</option></select></div>
    </div>
  </section>

  <section class="panel graphics">
    <div class="gtabs"><button class="gtab">Graphics</button><button class="gtab on">Plot 1<svg><use href="#close"/></svg></button><span class="pctl c-blue"><svg class="caret"><use href="#caret"/></svg><svg class="pin"><use href="#pin"/></svg></span></div>
    <div class="tools" role="toolbar" aria-label="Plot">
      <button aria-label="Zoom in"><svg class="i16"><use href="#zin"/></svg></button>
      <button aria-label="Zoom out"><svg class="i16"><use href="#zout"/></svg></button>
      <button aria-label="Zoom box"><svg class="i16"><use href="#zbox"/></svg></button>
      <button class="cbtn" aria-label="Zoom options"><svg class="caret"><use href="#caret"/></svg></button>
      <button aria-label="Zoom extents"><svg class="i16"><use href="#zext"/></svg></button>
      <i class="vsep"></i>
      <button aria-label="Default view"><svg class="i16"><use href="#axes"/></svg></button>
      <button class="cbtn" aria-label="View options"><svg class="caret"><use href="#caret"/></svg></button>
      <button aria-label="XY view"><svg class="i16"><use href="#axxy"/></svg></button>
      <button aria-label="YZ view"><svg class="i16"><use href="#axyz"/></svg></button>
      <button aria-label="XZ view"><svg class="i16"><use href="#axxz"/></svg></button>
      <i class="vsep"></i>
      <button aria-label="Rotate"><svg class="i16"><use href="#rot"/></svg></button>
      <button class="cbtn" aria-label="Rotate options"><svg class="caret"><use href="#caret"/></svg></button>
      <i class="vsep"></i>
      <button class="act wide" aria-label="Scene light"><svg class="i16"><use href="#light"/></svg><i></i><svg class="caret"><use href="#caret"/></svg></button>
      <button aria-label="Transparency"><svg class="i16"><use href="#wcube"/></svg></button>
      <button aria-label="Grid"><svg class="i16"><use href="#grid"/></svg></button>
      <button class="act" aria-label="Axis orientation"><svg class="i16"><use href="#axbox"/></svg></button>
      <button class="act" aria-label="Legends"><svg class="i16"><use href="#legend"/></svg></button>
      <i class="vsep"></i>
      <button aria-label="Lock"><svg class="i16"><use href="#lock"/></svg></button>
      <i class="vsep"></i>
      <button aria-label="Image settings"><svg class="i16"><use href="#apert"/></svg></button>
      <button class="cbtn" aria-label="Image options"><svg class="caret"><use href="#caret"/></svg></button>
      <button aria-label="Snapshot"><svg class="i16"><use href="#camera"/></svg></button>
      <button aria-label="Print"><svg class="i16"><use href="#print"/></svg></button>
    </div>
    <svg class="scene" viewBox="859 208 1016 835" preserveAspectRatio="xMidYMid slice" role="img" aria-label="Volume: Cell wave time scale (s)">
      <rect x="0" y="208" width="3000" height="836" fill="url(#g-bg)"/>
      <text x="876" y="232">Time=0</text>
      <text x="1270" y="233">Volume: Cell wave time scale (s)</text>
      <svg x="1853" y="213" width="17" height="17"><use href="#logo"/></svg>
      <g class="wire">
        <path d="M905 467L1213 390 1574.500 299 1828 453 1803 839 1676 881M1574.500 299L1573 330M1567 528v42M1213 390l123 89M926 852l34-10M1308 843l28 25"/>
      </g>
      <g id="coarse"></g>
      <path class="wire" d="M1828 453L1699 489M1213 390v24M1658 733l145 106"/>
      <g id="fine"></g>
      <text x="1285" y="618">plane1</text>
      <g fill="none" stroke-width="2">
        <ellipse cx="1306" cy="678" rx="35" ry="18" stroke="#5f8fb4"/>
        <ellipse cx="1307" cy="678" rx="34" ry="35" stroke="#5a9a48"/>
        <ellipse cx="1307" cy="678" rx="18" ry="36" stroke="#b02858" transform="rotate(-14 1307 678)"/>
        <path d="M1306 678v-34" stroke="#c8d0e0" stroke-width="3"/><path d="M1308 679h37" stroke="#a8cc88" stroke-width="3"/><path d="M1306 680l-2 14" stroke="#d8b0a0" stroke-width="3"/>
        <path d="M1301 646l5-17 6 17z" fill="#d8dcec" stroke="none"/><path d="M1345 674l16 6-16 5z" fill="#a8dca0" stroke="none"/><path d="M1298 692l12 1-6 12z" fill="#d0b0b0" stroke="none"/>
        <circle cx="1307" cy="678" r="3" fill="#111" stroke="#111"/>
      </g>
      <rect x="1805" y="273" width="16" height="735" fill="url(#g-bar)" stroke="#222"/>
      <path class="wire" d="M1805 315.500h3m10 0h3M1805 400.500h3m10 0h3M1805 485.500h3m10 0h3M1805 569.500h3m10 0h3M1805 654.500h3m10 0h3M1805 739.500h3m10 0h3M1805 823.500h3m10 0h3M1805 908.500h3m10 0h3M1805 993.500h3m10 0h3"/>
      <text x="1821" y="264">×10</text><text class="sup" x="1846" y="259">-6</text>
      <g><text x="1828" y="320">1.9</text><text x="1828" y="405">1.88</text><text x="1828" y="489">1.86</text><text x="1828" y="574">1.84</text><text x="1828" y="659">1.82</text><text x="1828" y="743">1.8</text><text x="1828" y="828">1.78</text><text x="1828" y="913">1.76</text><text x="1828" y="997">1.74</text></g>
      <g stroke-width="1.500"><path d="M903 1000v-18" stroke="#5a7ea8"/><path d="M903 974l3 9h-6z" fill="#5a7ea8"/><path d="M903 1000l-10-8" stroke="#4aa04a"/><path d="M888 987l8 2-3 5z" fill="#4aa04a"/><path d="M903 1000l18-5" stroke="#c02860"/><path d="M929 993l-8-1 1 6z" fill="#c02860"/></g>
      <text x="899" y="970">z</text><text x="882" y="987">y</text><text x="933" y="993">x</text>
    </svg>
  </section>

  <nav class="side" aria-label="Windows"><a href="#">Messages</a><a href="#">Progress</a><a href="#">Log</a><a href="#">Evaluation 3D</a></nav>
</main>
</div>
<footer class="status">4.02 GB | 7.55 GB</footer>
<script src="scene.js"></script>
</body>
</html>
```
FILE: styles.css
```css
* { box-sizing: border-box; }
body {
  margin: 0; min-height: 100vh; display: flex; flex-direction: column;
  background: #fcfcfe; color: #111;
  font: 11px/12px "Open Sans", "Noto Sans", sans-serif;
}
button { font: inherit; color: inherit; background: none; border: 0; padding: 0; margin: 0; }
h1, h2, h3, p, ul { margin: 0; padding: 0; font-weight: 400; font-size: inherit; }
svg { display: block; flex: none; }
i { font-style: normal; }
.defs { position: absolute; width: 0; height: 0; }
.i16 { width: 16px; height: 16px; }
.i12 { width: 13px; height: 13px; }
.caret { width: 8px; height: 8px; }
.pin { width: 8px; height: 12px; }
.c-blue { color: #3a87c4; }
.c-mute { color: #a0a0a0; }
.c-grey { color: #858585; }
.c-red { color: #dc6440; }
.vsep { width: 1px; height: 14px; background: #b8bcc2; margin: 0 4px; flex: none; }

.titlebar { height: 30px; display: flex; align-items: center; background: #fff; padding: 0 8px 0 4px; }
.applogo { margin-bottom: 4px; }
.quick { display: flex; align-items: center; padding-left: 10px; }
.quick button { width: 24px; display: grid; place-items: center; }
.quick .cbtn { width: 12px; }
.quick .vsep { margin: 0 3px; }
.apptitle { flex: 1; text-align: center; padding-right: 128px; font-size: 12px; }
.winbtns { display: flex; }
.winbtns button { width: 46px; height: 30px; display: grid; place-items: center; }
.winbtns svg { width: 12px; height: 12px; }

.app { flex: 1; display: flex; flex-direction: column; padding: 0 12px 0 11px; }
.menu { display: flex; background: #ebecee; height: 24px; padding: 1px 3px 0 0; }
.menu button { padding: 0 9px 0 10px; }
.menu .file { background: #3a8bc8; color: #fff; width: 56px; }
.menu .on { background: #fcfdff; color: #3a87c4; }
.menu .help { margin: 2px 0 5px auto; width: 16px; padding: 0; background: #3a87c4; color: #fff; font-size: 13px; }

.ribbon { display: flex; height: 91px; padding: 6px 0 3px; background: #f9fafd; border: 1px solid #d2d4d8; border-top: 0; }
.grp { display: flex; flex-direction: column; border-right: 1px solid #d6d8dc; }
.grp h2 { text-align: center; color: #6c6f75; }
.btns { flex: 1; display: flex; justify-content: center; }
.big { display: flex; flex-direction: column; align-items: center; gap: 4px; padding: 2px 4px 0; min-width: 44px; white-space: nowrap; line-height: 13px; }
.big > svg { width: 28px; height: 28px; }
.dd { display: inline-block; width: 5px; height: 5px; vertical-align: 1px; }
.stack { display: flex; flex-direction: column; gap: 6px; padding-left: 2px; }
.stack button { height: 16px; display: flex; align-items: center; gap: 3px; white-space: nowrap; }
.stack button:disabled { color: #b0b3b8; }
.stack b { font-weight: 400; color: #3a87c4; font-size: 13px; width: 15px; }
.stack .fx { font-size: 10px; }
.g-work { width: 138px; } .g-model { width: 166px; } .g-defs { width: 187px; } .g-geom { width: 134px; }
.g-mat { width: 64px; } .g-phys { width: 170px; } .g-mesh { width: 101px; } .g-study { width: 157px; }
.g-res { width: 248px; } .g-lay { width: 127px; }

.work { flex: 1; display: grid; grid-template-columns: 365px 472px 1fr 25px; padding-top: 4px; }
.builder, .settings { margin-right: 5px; }
.work { grid-template-columns: 370px 477px 1fr 25px; }
.panel { background: #f9fafd; border: 1px solid #cfd1d6; display: flex; flex-direction: column; min-width: 0; }
.phead { display: flex; justify-content: space-between; padding: 6px 4px 0 7px; }
.phead h2 { font-size: 20px; line-height: 26px; font-weight: 300; color: #34507f; }
.pctl { display: flex; align-items: center; gap: 6px; height: 24px; }
.phead .pctl { color: #505050; }
.tools { display: flex; align-items: center; padding-left: 3px; height: 22px; }
.builder .tools { margin-bottom: 1px; }
.tools button { width: 23px; height: 20px; display: grid; place-items: center; }
.tools .cbtn { width: 12px; margin-right: 6px; }
.tools .act { background: #9cd0f8; border: 1px solid #4a94d0; border-radius: 2px; margin: 0 1px; width: 21px; }
.tools .wide { width: 36px; margin: 0; display: flex; align-items: center; justify-content: space-around; }
.wide i { width: 1px; height: 18px; background: #4a94d0; }

.tree { flex: 1; list-style: none; margin: 0 5px 8px 4px; background: #fff; border: 1px solid #c9cbd0; }
.tree li { height: 18px; display: flex; align-items: center; white-space: pre; padding-left: 5px; }
.tree .l1 { padding-left: 25px; }
.tree .l2 { padding-left: 45px; }
.tree .l3 { padding-left: 65px; }
.tree .sel { background: #dbdbdb; }
.tree em { margin-left: 3px; }
.tw { width: 8px; height: 9px; margin-right: 7px; }
.tree .i16, .derived { margin-right: 6px; }
.derived { font: 8px/8px "Liberation Sans", sans-serif; color: #a8489a; width: 16px; }

.sub { padding-left: 7px; font-size: 13px; line-height: 18px; color: #4c648c; margin-top: 3px; }
.buildall { display: flex; align-items: center; gap: 4px; padding-left: 7px; height: 20px; }
.labelrow { display: flex; align-items: center; padding: 0 4px 0 5px; margin: 13px 0 10px; height: 22px; }
.labelrow label { width: 41px; }
.labelrow input { flex: 1; height: 18px; font: inherit; border: 1px solid #cfd1d6; background: #fff; padding: 0 3px; }
.labelrow button { margin-left: 8px; width: 20px; height: 22px; display: grid; place-items: center; border: 1px solid #d4d6da; background: #f2f3f5; }
.settings h3 { height: 26px; background: #e0e9f5; display: flex; align-items: center; gap: 12px; padding-left: 5px; font-size: 12px; color: #101828; }
.settings h3 .caret { width: 9px; height: 9px; color: #484848; }
.sec { padding: 9px 4px 11px 5px; display: flex; flex-direction: column; }
.sec label { line-height: 16px; margin-bottom: 5px; }
.sec .dropdown + label { margin-top: 6px; }
.dropdown { display: grid; align-items: center; }
.dropdown select { grid-area: 1 / 1; appearance: none; width: 100%; height: 21px; font: inherit; color: inherit; padding: 0 12px; border: 1px solid #d0d2d6; border-radius: 2px; background: #ececef; }
.dropdown::after { content: ""; grid-area: 1 / 1; justify-self: end; margin-right: 7px; width: 7px; height: 5px; background: #111; clip-path: polygon(0 0, 100% 0, 50% 100%); pointer-events: none; }
.sec table { border-collapse: collapse; margin-top: 6px; border: 1px solid #d0d2d6; border-bottom: 2px solid #b0b0b0; border-right: 2px solid #b0b0b0; background: #fff; width: 100%; }
th { background: #f0f0f1; font-weight: 400; text-align: left; height: 27px; padding: 3px; vertical-align: top; }
th span { display: block; padding: 6px 0 0 15px; }
th.use span { padding-left: 0; }
td { height: 20px; padding: 0 3px; }
.use { width: 31px; text-align: center; border-left: 1px solid #b0b0b0; }
.ff { width: 10px; height: 8px; float: left; margin-left: 1px; margin-right: -11px; }
.use input { appearance: none; display: block; margin: 0 auto; width: 14px; height: 14px; border: 1px solid #5a9cc0; }
.use input:checked::before { content: ""; display: block; width: 4px; height: 8px; margin-left: 4px; border: solid #5a9cc0; border-width: 0 2px 2px 0; rotate: 40deg; }

.gtabs { display: flex; align-items: flex-end; height: 29px; padding: 0 4px 0 4px; border-bottom: 1px solid #cfd1d6; }
.gtab { height: 22px; padding: 0 4px; background: #ebebec; font-size: 12px; margin-right: 8px; }
.gtab.on { display: flex; align-items: center; gap: 8px; height: 23px; padding: 0 6px 0 4px; background: #fcfdff; border: 1px solid #cfd1d6; border-bottom: 0; color: #3a87c4; margin-bottom: -1px; }
.gtab svg { width: 10px; height: 10px; }
.gtabs .pctl { margin-left: auto; }
.graphics .tools { height: 30px; padding: 0 0 0 3px; }
.scene { flex: 1 1 0; min-height: 0; width: 100%; }
.scene text { font: 12px "DejaVu Sans", sans-serif; fill: #111; }
.scene .sup { font-size: 9px; }
.wire { fill: none; stroke: #111; }

.side { display: flex; flex-direction: column; gap: 12px; padding: 6px 0 0 8px; }
.side a { writing-mode: vertical-rl; line-height: 16px; color: #2c4a80; text-decoration: none; }
.status { height: 36px; display: flex; align-items: center; justify-content: center; padding: 3px 0 0 625px; }
```
FILE: scene.js
```js
// Draws the tetrahedral elements of both mesh domains into the plot.
const NS = "http://www.w3.org/2000/svg";

function layer(parent, matrix) {
  const g = document.createElementNS(NS, "g");
  g.setAttribute("transform", `matrix(${matrix})`);
  parent.appendChild(g);
  return g;
}
function face(g, points, fill, edge) {
  const p = document.createElementNS(NS, "polygon");
  p.setAttribute("points", points);
  p.setAttribute("fill", fill);
  p.setAttribute("stroke", edge || fill);
  p.setAttribute("stroke-width", edge ? 4 : 1.5);
  g.appendChild(p);
}

const coarse = document.getElementById("coarse");
const left = layer(coarse, ".3333 0 0 .3333 880 360");
const lower = layer(coarse, ".392 0 0 .3333 1300 580");
const upper = layer(coarse, ".3333 0 0 .3333 1400 140");

const leftFaces = [
  ["1000,92 1150,225 1155,245 1000,170", "#c4601c"], ["1000,92 1060,190 1000,170", "#a85014"],
  ["1195,325 1337,308 1300,390 1220,380", "#861818"], ["1190,400 1300,430 1345,520 1335,620 1250,600", "#30060a"],
  ["1250,600 1340,560 1300,800 1250,760", "#44080c"],
  ["1355,447 1515,460 1400,520 1350,520", "#6c6c10"], ["1460,470 1515,460 1490,490", "#186858"],
  ["1505,305 1530,305 1522,370", "#5a1010"], ["1530,280 1570,262 1570,620 1505,600", "#c46418"],
  ["1400,500 1530,465 1520,560 1460,505", "#b05018"],
  ["1350,540 1460,505 1520,545 1505,600", "#e45a20"], ["1350,540 1505,600 1455,695", "#d03c24"],
  ["1345,540 1455,695 1310,685", "#a82424"], ["1310,685 1455,695 1365,870 1250,800", "#7c1418"],
  ["1455,695 1570,610 1570,700", "#cc7020"], ["1440,750 1470,690 1570,735", "#c02a1c"],
  ["1365,870 1455,740 1570,730 1570,870", "#7c6010"],
  ["1350,870 1570,870 1570,1000 1365,1060", "#741418"], ["1400,940 1570,900 1570,1000", "#d05420"],
  ["1350,1010 1525,1020 1500,1120 1440,1150 1350,1100", "#4a0c0c"],
  ["1310,1170 1510,1145 1395,1322 1300,1260", "#8a2018"]
];
const lowerFaces = [
  ["260,-60 1000,-60 940,130 820,300 640,420 330,330 250,230", "#5c1014"],
  ["60,-20 200,20 100,210 20,180", "#6c1014"], ["100,210 150,90 240,70 240,210", "#7a5c10"],
  ["140,-30 240,-20 175,60", "#d86a24"], ["180,20 300,-10 290,200 280,230", "#c88018"],
  ["310,-10 375,40 280,230", "#b87018"], ["345,120 400,160 320,250 275,240", "#4c4010"],
  ["365,-20 520,-20 500,40 435,225 403,270 372,160", "#c4601c"],
  ["75,215 275,240 120,280", "#5a1410"], ["95,300 275,242 220,335", "#dc5420"], ["275,242 370,290 220,335", "#801820"],
  ["90,310 220,340 90,390", "#8a2020"], ["220,335 370,290 245,365", "#6c1418"],
  ["85,390 218,370 225,415 190,490 80,470", "#3a0a08"], ["80,470 200,490 115,660 55,540", "#8a2018"],
  ["230,412 245,365 370,280 322,420", "#641018"], ["322,320 400,260 485,380 490,430 370,470 365,425 322,440", "#2c0408"],
  ["370,160 440,230 400,290 330,300 275,242", "#300608"], ["443,342 477,384 460,380", "#eef4fd"],
  ["440,210 500,150 580,150 550,290", "#7c1c1c"], ["435,225 550,290 640,380 490,385", "#4c0c10"],
  ["520,10 575,-10 580,150 500,110", "#7c2020"], ["500,40 520,20 510,100 440,215", "#a84c18"],
  ["570,10 645,45 573,150", "#6c1014", "#f01818"], ["550,195 523,287 468,277", "#5c1014", "#f01818"],
  ["650,-30 730,-30 750,60 665,95", "#5a1014"], ["748,30 770,12 855,17 750,55", "#7a3014"],
  ["665,95 750,50 855,17 810,160", "#40080c"], ["580,150 660,85 610,245", "#8c2420"],
  ["665,85 800,165 610,245", "#b42c20"], ["605,245 770,215 645,380", "#98321c"], ["550,300 605,245 645,380", "#6a1014"],
  ["645,380 770,215 820,290 915,440 770,410 650,410", "#641416"],
  ["770,205 815,170 855,297", "#9a2420"], ["810,165 930,120 860,297", "#881c18"],
  ["820,-10 1005,-20 1005,95 935,120 915,45", "#a02420"], ["1005,-20 1215,-10 1160,50 1005,95", "#701018"],
  ["1005,95 935,120 955,165 890,235 860,297 1040,258", "#8c1820"], ["876,110 925,125 953,160 905,235 900,160", "#3a3010"],
  ["1005,95 1100,70 1170,275 1040,258", "#b86418"], ["1100,70 1160,52 1202,122 1175,275", "#8c7c10"],
  ["953,290 1000,262 1172,278 1100,345", "#c08c18"], ["915,450 930,290 980,300 1028,350 990,475", "#b45c18"],
  ["820,290 860,297 928,285 912,440", "#7a1818"], ["1028,350 1100,347 1062,508 983,515", "#6a1414"],
  ["1100,347 1162,490 1062,508", "#f09418"], ["1100,347 1208,355 1290,548 1162,490", "#b86c18"],
  ["1062,508 1163,490 1175,660", "#4a060a"], ["1163,490 1292,562 1175,660", "#88bc18"],
  ["680,405 725,408 725,452", "#301010"], ["745,405 770,350 915,440 890,610 790,550 808,518", "#7c2018"],
  ["485,385 650,380 664,420 632,550 450,550 370,470", "#641418"], ["315,490 370,425 485,430 450,550", "#741418"],
  ["485,430 570,520 526,668 500,550", "#7c1c18"], ["523,433 575,433 553,467", "#6c1014", "#f01818"],
  ["650,497 785,550 735,635 628,550", "#240206"], ["735,635 808,515 885,610 895,685 825,705", "#8a2018"],
  ["903,520 990,540 885,610", "#2c0408"], ["990,540 1073,755 885,612", "#841818"], ["925,600 980,580 978,650", "#b01c1c"],
  ["885,612 1073,755 917,803 897,685", "#9c2820"],
  ["662,597 737,862 595,800", "#dcbc10"], ["662,597 793,680 737,862", "#b8a010"],
  ["793,680 916,803 922,902 870,900 737,862", "#b46a14"], ["850,898 912,880 920,902", "#f86018"],
  ["488,670 580,675 518,820", "#8c1418"], ["580,675 658,773 518,815", "#8c1c20", "#f01818"]
];
const upperFaces = [
  ["316,530 485,568 338,635", "#c42e20"], ["338,633 485,568 550,672 508,706", "#6f1115"],
  ["485,568 668,564 588,646", "#c84518"], ["490,572 588,646 550,672", "#b04a1c"],
  ["668,564 687,648 640,648", "#7c1518"], ["588,646 668,564 640,648", "#a84014"],
  ["588,646 812,653 722,732", "#c8640c"], ["588,646 722,734 474,736", "#a81c1c"],
  ["236,826 330,915 220,893", "#701c1e"], ["240,824 370,783 388,848 330,915", "#350a0e"],
  ["220,893 388,848 330,940 275,960", "#701a1c"], ["160,915 220,893 205,940", "#5a1014"],
  ["388,848 570,878 457,917", "#7c1a18"], ["388,848 515,980 358,970 270,960", "#8c2c1c"],
  ["270,958 358,970 322,997", "#8a1818"], ["457,917 570,878 515,980", "#2a0408"],
  ["338,635 474,734 385,850", "#c8a81a"], ["474,734 575,860 570,880 385,850", "#b8a018"],
  ["510,770 600,825 585,865 555,830", "#6f2414"], ["474,736 720,736 600,825", "#c88a14"],
  ["720,736 655,872 600,825", "#8a6a10"], ["712,760 726,808 695,790", "#6f1115"],
  ["600,815 700,993 517,983", "#f04a24"], ["600,815 655,870 700,993", "#9a2c1c"],
  ["442,978 562,988 562,1012 452,990", "#300608"], ["323,997 196,1073 290,1165", "#4a0c12"],
  ["323,997 325,1183 285,1160", "#38080e"], ["452,988 570,1160 425,1167", "#3a0a10"], ["452,988 663,1043 570,1160", "#200206"],
  ["853,843 830,952 720,1076", "#7a1c20"], ["853,843 1018,915 830,952", "#c87818"],
  ["830,952 900,1047 890,1070 720,1076", "#8a181c"], ["830,952 1018,915 1058,998 900,1047", "#7a1018"],
  ["1018,915 1158,1020 1108,1147 1055,998", "#b4701a"], ["900,1060 1060,998 1108,1147", "#b87c1c"],
  ["703,993 755,1018 720,1076", "#380810"], ["720,1076 900,1070 722,1168", "#2c0408"], ["703,993 722,1076 722,1168", "#6f1115"],
  ["880,1085 900,1180 795,1190", "#5a1014"], ["918,1064 1108,1147 888,1218", "#801418"],
  ["885,1218 795,1190 900,1130", "#741418"],
  ["722,1170 885,1218 880,1380 780,1370 690,1280", "#8c181c"], ["722,1170 690,1280 545,1256", "#e42c1a"],
  ["545,1256 690,1280 700,1335", "#c83c24"], ["885,1220 1065,1160 1047,1307", "#b42a20"],
  ["885,1220 1047,1307 1062,1380 880,1380", "#701218"], ["1108,1147 1214,1170 1214,1230 1060,1368 1047,1307", "#b02820"],
  ["-40,935 0,910 90,875 213,945", "#d8501c"], ["-40,935 213,948 90,1080 -20,1160", "#e86020"],
  ["0,940 90,1080 -30,1180 -30,920", "#a85014"], ["213,948 135,1070 105,1085 90,1080", "#5a1014"],
  ["90,1085 145,1135 90,1135", "#4a0a10"], ["85,1135 145,1135 85,1165", "#107858"],
  ["85,1165 150,1140 240,1275 70,1300", "#7a1c1c"], ["150,1138 195,1148 265,1220 240,1275", "#4c8010"],
  ["90,1085 75,1300 -20,1270 -30,1150", "#c86418"], ["120,1215 245,1280 220,1370 100,1380", "#b05820"],
  ["285,1168 310,1285 220,1370", "#b02420"], ["300,1240 360,1200 320,1310", "#6c5a10"],
  ["375,1160 545,1256 320,1330", "#d03c24"], ["545,1260 575,1380 480,1380 460,1320", "#5a0e14"],
  ["575,1350 700,1335 680,1380", "#8a3014"]
];
leftFaces.forEach(f => face(left, ...f));
lowerFaces.forEach(f => face(lower, ...f));
upperFaces.forEach(f => face(upper, ...f));

// The fine domain: seeded, so that every load gives the same elements.
let seed = 7;
const rnd = () => { seed = (seed * 1664525 + 1013904223) >>> 0; return seed / 4294967296; };
const outline = [215,355,300,335,380,310,480,290,560,275,640,265,730,250,790,200,870,200,915,125,990,120,1130,250,1170,310,1240,360,
  1290,360,1265,420,1300,480,1290,560,1255,640,1300,660,1280,740,1300,800,1330,900,1310,980,1285,1060,1335,1090,1325,1160,1285,1220,
  1335,1265,1325,1330,1260,1380,1270,1430,1220,1470,1150,1455,1070,1475,900,1465,800,1450,750,1455,680,1410,560,1445,470,1440,380,1420,
  310,1440,235,1420,215,1380,190,1310,255,1250,225,1200,275,1110,300,980,325,920,265,885,165,865,180,830,245,760,205,700,190,620,215,585,
  175,530,185,505,250,460,260,410];
function inside(x, y) {
  let hit = false;
  for (let i = 0, j = outline.length - 2; i < outline.length; j = i, i += 2) {
    const xi = outline[i], yi = outline[i + 1], xj = outline[j], yj = outline[j + 1];
    if ((yi > y) !== (yj > y) && x < (xj - xi) * (y - yi) / (yj - yi) + xi) hit = !hit;
  }
  return hit;
}
const hues = [[22,180,76],[32,215,78],[14,130,84],[120,145,18],[145,155,22],[85,145,22],[235,118,26],[215,96,24],[185,96,22],
  [240,62,26],[208,40,28],[126,24,26],[88,14,20],[140,34,26],[226,165,26],[245,88,30],[28,155,64],[130,130,20],[150,30,26],[160,76,22]];
const rare = [[60,105,150],[235,210,20],[230,140,100],[120,230,30],[200,60,150],[40,125,120],[130,225,40]];
const tone = (c, k) => `rgb(${c.map(v => Math.min(255, Math.round(v * k))).join()})`;
const fine = layer(document.getElementById("fine"), ".3333 0 0 .3333 880 360");

function tet(x, y, r) {
  const c = rnd() < .06 ? rare[Math.floor(rnd() * rare.length)] : hues[Math.floor(rnd() * hues.length)];
  const a = rnd() * 6.283, pts = [];
  for (let i = 0; i < 3; i++) {
    const t = a + i * 2.094 + (rnd() - .5), q = r * (.75 + rnd() * .6);
    pts.push([(x + q * Math.cos(t)).toFixed(0), (y + q * Math.sin(t)).toFixed(0)]);
  }
  const m = [(x + (rnd() - .5) * r).toFixed(0), (y + (rnd() - .5) * r).toFixed(0)];
  const lit = [1.12, .95, .72];
  for (let i = 0; i < 3; i++) face(fine, `${pts[i]} ${pts[(i + 1) % 3]} ${m}`, tone(c, lit[i]));
}
// Openings in the front of the cloud, through which the background shows.
const holes = [[812,240,20],[515,690,30],[310,600,18],[270,735,24],[340,735,22],[645,1130,12],[300,1330,14],[585,265,16],[320,1205,14],[1220,635,14],[1280,1000,26],[1040,1365,14],[420,1150,10],[380,640,10]];
function open(x, y) { return holes.some(h => Math.hypot(x - h[0], y - h[1]) < h[2] + 16); }
for (let n = 0; n < 5200;) {
  const x = 130 + rnd() * 1240, y = 90 + rnd() * 1420;
  if (!inside(x, y)) continue;
  n++;
  if (!open(x, y)) tet(x, y, 20 + rnd() * 16);
}
[[105,370,16],[180,362,18],[120,413,10],[155,548,14],[138,725,18],[585,225,25],[160,1050,22],[170,925,22],[260,905,22],
 [180,1310,26],[175,1405,18],[230,380,24],[390,300,28],[1340,375,22],[1240,1490,22],[870,1485,20],[750,1470,26],[1065,1490,20],
 [1345,1340,22],[310,1465,18],[630,225,15]].forEach(t => tet(...t));
```
